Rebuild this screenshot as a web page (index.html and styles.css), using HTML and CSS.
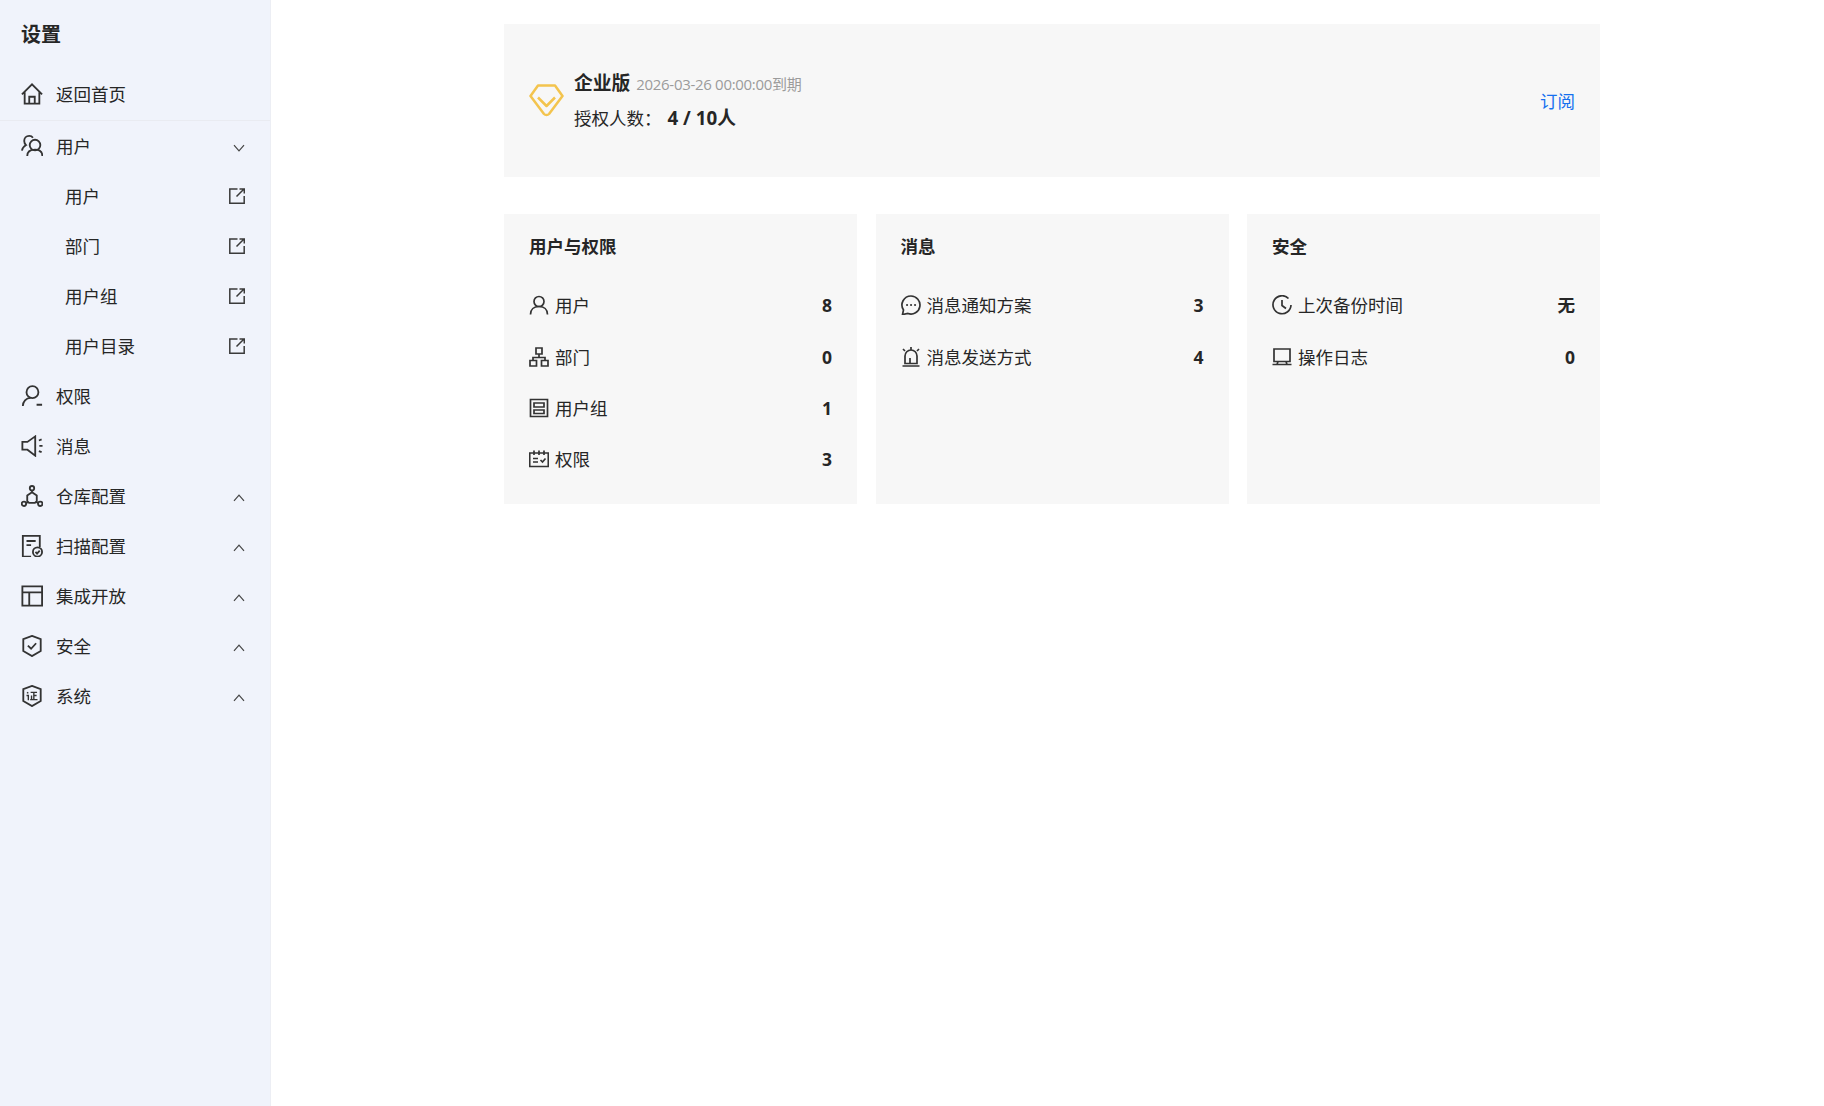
FILE: index.html
```html
<!DOCTYPE html>
<html lang="zh-CN">
<head>
<meta charset="utf-8">
<title>设置</title>
<link rel="stylesheet" href="styles.css">
</head>
<body>
<div class="app">
  <aside class="sidebar">
    <div class="side-title">设置</div>
    <div class="home-wrap">
      <a class="nav-item"><svg class="nav-icon" viewBox="0 0 24 24"><path d="M1 12.500 12 1.500l11 11M4 10v12.500h16V10M9 22.500V15h6v7.500"/></svg><span class="nav-label">返回首页</span></a>
    </div>
    <a class="nav-item"><svg class="nav-icon" viewBox="0 0 24 24"><circle cx="15.300" cy="11" r="5.800"/><path d="M6.800 23c0-4.500 3.500-7 8.500-7s8 2.500 8 7M13 3C12 1.500 10.500 1 9 1 5.500 1 3.500 3.500 3.500 6.500c0 2 1 3.500 2 4.500C3 12.500 1.500 14.500 1 17"/></svg><span class="nav-label">用户</span><svg class="chev" viewBox="0 0 12 8"><path d="M1 1.200 6 6.800l5-5.600"/></svg></a>
    <a class="nav-item sub"><span class="nav-label">用户</span><svg class="ext" viewBox="0 0 16 16"><path d="M8.500 1H.8v14.200h14.400V8"/><path d="M7.500 8.500 14.500 1.500M10.500 1h4.800v4.500"/></svg></a>
    <a class="nav-item sub"><span class="nav-label">部门</span><svg class="ext" viewBox="0 0 16 16"><path d="M8.500 1H.8v14.200h14.400V8"/><path d="M7.500 8.500 14.500 1.500M10.500 1h4.800v4.500"/></svg></a>
    <a class="nav-item sub"><span class="nav-label">用户组</span><svg class="ext" viewBox="0 0 16 16"><path d="M8.500 1H.8v14.200h14.400V8"/><path d="M7.500 8.500 14.500 1.500M10.500 1h4.800v4.500"/></svg></a>
    <a class="nav-item sub"><span class="nav-label">用户目录</span><svg class="ext" viewBox="0 0 16 16"><path d="M8.500 1H.8v14.200h14.400V8"/><path d="M7.500 8.500 14.500 1.500M10.500 1h4.800v4.500"/></svg></a>
    <a class="nav-item"><svg class="nav-icon" viewBox="0 0 24 24"><circle cx="12.500" cy="7.800" r="6.500"/><path d="M2 23c0-5 3.500-8.800 8.500-9M17 21.500h6"/></svg><span class="nav-label">权限</span></a>
    <a class="nav-item"><svg class="nav-icon" viewBox="0 0 24 24"><path d="M15.500 1.500 7 7.500H1.500v8.500H7l8.500 6.500zM19.500 6l3-1.200M20 11.800h3.500M19.500 17.500l3 1.200"/></svg><span class="nav-label">消息</span></a>
    <a class="nav-item"><svg class="nav-icon" viewBox="0 0 24 24"><circle cx="12" cy="3.500" r="2.400"/><circle cx="3.200" cy="20.500" r="2.400"/><circle cx="21" cy="20.500" r="2.400"/><path d="M12 6v2l5.200 3.500v6l-2 2H8.800l-2-2v-6L12 8M5.600 19.800l1.700-1.200M18.700 19.800 17 18.600"/></svg><span class="nav-label">仓库配置</span><svg class="chev" viewBox="0 0 12 8"><path d="M1 6.800 6 1.200l5 5.600"/></svg></a>
    <a class="nav-item"><svg class="nav-icon" viewBox="0 0 24 24"><path d="M11 23.500H2V1h18.500v12M6 6.500h10M6 11h5"/><circle cx="18" cy="18.500" r="5"/><path d="m15.800 18.500 1.700 1.800 2.900-3.200"/></svg><span class="nav-label">扫描配置</span><svg class="chev" viewBox="0 0 12 8"><path d="M1 6.800 6 1.200l5 5.600"/></svg></a>
    <a class="nav-item"><svg class="nav-icon" viewBox="0 0 24 24"><path d="M1.500 1.500h21.500v21H1.500zM1.500 8H23M9 8v14.500"/></svg><span class="nav-label">集成开放</span><svg class="chev" viewBox="0 0 12 8"><path d="M1 6.800 6 1.200l5 5.600"/></svg></a>
    <a class="nav-item"><svg class="nav-icon" viewBox="0 0 24 24"><path d="M12 1 21.500 4.500v13L12 23l-9.500-5.500v-13zM7.500 11.500 11 15l5.500-6"/></svg><span class="nav-label">安全</span><svg class="chev" viewBox="0 0 12 8"><path d="M1 6.800 6 1.200l5 5.600"/></svg></a>
    <a class="nav-item"><svg class="nav-icon" viewBox="0 0 24 24"><path d="M12 1 21.500 4.500v13L12 23l-9.500-5.500v-13z"/><path class="cert" d="M6.500 8l1.500 1M6 11.500h2v5M10.500 8h7M14 8v8M11.500 11.500V16M10 16h8M14 11.500h3"/></svg><span class="nav-label">系统</span><svg class="chev" viewBox="0 0 12 8"><path d="M1 6.800 6 1.200l5 5.600"/></svg></a>
  </aside>
  <main class="main">
    <section class="license">
      <svg class="gem" viewBox="0 0 35 33"><path d="M9 1.500h17l7.500 10.500L20 30a3.500 3.500 0 0 1-5 0L1.500 12z"/><path d="m9 13.500 8.500 8.500 8.500-8.500"/></svg>
      <div class="license-text">
        <div class="license-top"><span class="edition">企业版</span><span class="expire">2026-03-26 00:00:00到期</span></div>
        <div class="license-seats"><span>授权人数：</span><strong class="seats">4 / 10人</strong></div>
      </div>
      <a class="subscribe">订阅</a>
    </section>
    <section class="cards">
      <div class="card">
        <h3 class="card-title">用户与权限</h3>
        <div class="row"><svg class="row-icon" viewBox="0 0 20 20"><circle cx="10" cy="6.500" r="5"/><path d="M1.500 19.500c0-5 3.500-8 8.500-8s8.500 3 8.500 8"/></svg><span class="row-label">用户</span><b class="row-value">8</b></div>
        <div class="row"><svg class="row-icon" viewBox="0 0 20 20"><path d="M7 1h6v6H7zM1 13.500h6.500v5.500H1zM12.500 13.500H19v5.500h-6.500zM10 7v3.500M4 13.500v-3h12v3"/></svg><span class="row-label">部门</span><b class="row-value">0</b></div>
        <div class="row"><svg class="row-icon" viewBox="0 0 20 20"><path d="M1.500 1.500h17v17h-17zM5 5h10v4H5zM5 12h10v3.500H5z"/></svg><span class="row-label">用户组</span><b class="row-value">1</b></div>
        <div class="row"><svg class="row-icon" viewBox="0 0 20 20"><path d="M.7 4h18.600v13.500H.7zM5 1.500V6M10 1.500V6M15 1.500V6M4 9.500h5M4 13h5M11.500 11l2 2 3-3.500"/></svg><span class="row-label">权限</span><b class="row-value">3</b></div>
      </div>
      <div class="card">
        <h3 class="card-title">消息</h3>
        <div class="row"><svg class="row-icon" viewBox="0 0 20 20"><path d="M10 1a9 9 0 1 1-3 17.500l-5.500 1 1-4.500A9 9 0 0 1 10 1z"/><path class="dots" d="M6 10h.1M10 10h.1M14 10h.1"/></svg><span class="row-label">消息通知方案</span><b class="row-value">3</b></div>
        <div class="row"><svg class="row-icon" viewBox="0 0 20 20"><path d="M1.500 19h17M4 16.500V9a6 6 0 0 1 12 0v7.500zM9 16.500V11M10 0v2.500M2 2l2 2M18 2l-2 2"/></svg><span class="row-label">消息发送方式</span><b class="row-value">4</b></div>
      </div>
      <div class="card">
        <h3 class="card-title">安全</h3>
        <div class="row"><svg class="row-icon" viewBox="0 0 20 20"><path d="M16.500 3.500A9 9 0 1 0 19 10M10 5v5.500l4 3"/></svg><span class="row-label">上次备份时间</span><b class="row-value">无</b></div>
        <div class="row"><svg class="row-icon" viewBox="0 0 20 20"><path d="M2 2h16v12.500H2zM.5 17.500h19M6 14.500l-1 3M14 14.500l1 3"/></svg><span class="row-label">操作日志</span><b class="row-value">0</b></div>
      </div>
    </section>
  </main>
</div>
</body>
</html>
```
FILE: styles.css
```css
* { box-sizing: border-box; }
html, body { margin: 0; height: 100%; }
body {
  font-family: "Open Sans", "Noto Sans CJK SC", sans-serif;
  font-size: 17.5px;
  color: #262626;
  background: #fff;
}
.app { display: flex; height: 1106px; }
.sidebar {
  width: 271px;
  flex: none;
  background: #f0f3fb;
  border-right: 1px solid #eceef4;
}
.side-title {
  height: 69px;
  padding: 15px 0 0 21px;
  font-size: 20px;
  font-weight: 700;
  line-height: 40px;
}
.home-wrap {
  height: 52px;
  border-bottom: 1px solid #e9ebf1;
}
.nav-item {
  display: flex;
  align-items: center;
  height: 50px;
  padding: 0 25px 0 21px;
}
.nav-item.sub { padding-left: 65px; }
.nav-icon {
  width: 22px;
  height: 22px;
  margin-right: 13px;
  flex: none;
  fill: none;
  stroke: #333;
  stroke-width: 2;
}
.cert { stroke-width: 1.500; }
.nav-label { flex: 1; line-height: 24px; }
.chev {
  width: 12px;
  height: 8px;
  fill: none;
  stroke: #444;
  stroke-width: 1.200;
  margin-top: 3px;
}
.ext {
  width: 16px;
  height: 16px;
  fill: none;
  stroke: #3a3a3a;
  stroke-width: 1.500;
}
.main { flex: 1; padding: 24px 0 0 233px; }
.license {
  display: flex;
  align-items: center;
  width: 1096px;
  height: 153px;
  padding: 0 25px;
  background: #f7f7f7;
}
.gem {
  width: 35px;
  height: 33px;
  margin-right: 10px;
  flex: none;
  fill: none;
  stroke: #f3c44e;
  stroke-width: 2.500;
  stroke-linejoin: round;
}
.license-text { flex: 1; }
.license-top { display: flex; align-items: baseline; line-height: 30px; }
.edition { font-size: 18.750px; font-weight: 700; margin-right: 6px; }
.expire { font-size: 15px; color: #9b9b9b; letter-spacing: -0.300px; }
.license-seats { display: flex; align-items: baseline; line-height: 30px; margin-top: 4px; }
.seats { font-size: 18.750px; margin-left: 6px; }
.subscribe { color: #1570ef; }
.cards {
  display: grid;
  grid-template-columns: repeat(3, 1fr);
  column-gap: 18.500px;
  width: 1096px;
  height: 290px;
  margin-top: 37px;
}
.card { background: #f7f7f7; padding: 17px 25px 0; }
.card-title {
  margin: 0 0 18.650px;
  font-size: 17.500px;
  font-weight: 700;
  line-height: 30px;
}
.row {
  display: flex;
  align-items: center;
  height: 51.300px;
  line-height: 24px;
}
.row-icon {
  width: 20px;
  height: 20px;
  margin-right: 6px;
  flex: none;
  fill: none;
  stroke: #333;
  stroke-width: 1.700;
}
.row-label { flex: 1; }
.row-value { font-weight: 700; }
.dots { stroke-width: 2; stroke-linecap: round; }
```
